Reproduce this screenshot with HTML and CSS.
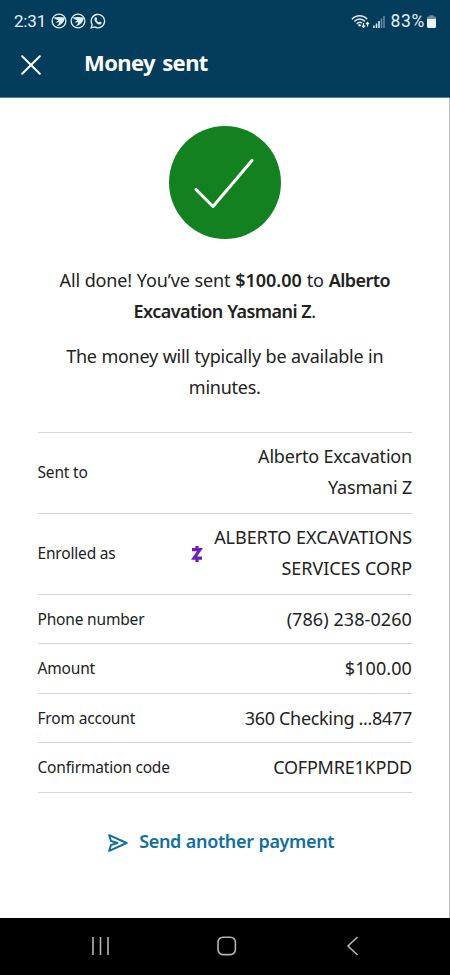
FILE: index.html
```html
<!DOCTYPE html>
<html lang="en">
<head>
  <meta charset="UTF-8">
  <meta name="viewport" content="width=device-width, initial-scale=1.0">
  <link rel="stylesheet" href="styles.css">
  <title>Money sent</title>
</head>
<body>
  <header class="header">
    <div class="status">
      <span class="status__time">2:31</span>
      <svg class="status__app" viewBox="0 0 16 16">
        <circle cx="8" cy="8" r="6.9" />
        <path class="fill" d="M2.2 4.6Q8 3.6 13.8 4.6C13.8 8.8 10 12.6 5.4 13.4 7 11.8 8 10.6 8.4 9.2L4.6 9.4 7.4 7.2Q4.4 6.8 2.2 4.6Z" />
      </svg>
      <svg class="status__app" viewBox="0 0 16 16">
        <circle cx="8" cy="8" r="6.9" />
        <path class="fill" d="M2.2 4.6Q8 3.6 13.8 4.6C13.8 8.8 10 12.6 5.4 13.4 7 11.8 8 10.6 8.4 9.2L4.6 9.4 7.4 7.2Q4.4 6.8 2.2 4.6Z" />
      </svg>
      <svg class="status__app" viewBox="0 0 16 16">
        <path d="M1.2 14.8 2.2 11.6A6.7 6.7 0 1 1 4.6 13.9Z" />
        <path class="fill" d="M5.5 4.3 6.6 4.4 7.2 6 6.5 7C7 8.1 7.8 8.9 9 9.4L9.9 8.6 11.6 9.4C11.6 10.8 10.8 11.5 9.6 11.5 7.2 11.3 4.7 8.8 4.5 6.4 4.4 5.4 4.8 4.7 5.5 4.3Z" />
      </svg>
      <svg class="status__wifi" viewBox="0 0 19 15">
        <path d="M1 5.2C5.2.5 12 .5 16.2 5.2M3.4 7.6C6.5 4.3 10.8 4.3 13.9 7.4M5.8 10C7.5 8.1 9.6 8 11 9" />
        <circle class="fill" cx="8.6" cy="11.3" r="1.2" />
        <path class="thin" d="M12.5 9V13M10.9 11.6 12.5 13.3 14.1 11.6M16.5 12.6V8.6M14.9 10.2 16.5 8.5 18.1 10.2" />
      </svg>
      <svg class="status__signal" viewBox="0 0 12 13">
        <path d="M1 13V10.5M3.5 13V8.5M6 13V6" />
        <path class="dim" d="M8.5 13V3.5M11 13V1" />
      </svg>
      <span class="status__percent">83%</span>
      <svg class="status__battery" viewBox="0 0 9 13">
        <path class="dim" d="M0 4V2.5Q0 1.5 1 1.5H2.5V.3H6.5V1.5H8Q9 1.5 9 2.5V4Z" />
        <path d="M0 4H9V11.5Q9 13 7.5 13H1.5Q0 13 0 11.5Z" />
      </svg>
    </div>
    <div class="title-bar">
      <svg class="title-bar__close" viewBox="0 0 20 20">
        <path d="M1.2 1.2 18.8 18.8M18.8 1.2 1.2 18.8" />
      </svg>
      <h1 class="title-bar__title">Money sent</h1>
    </div>
  </header>

  <main class="content">
    <svg class="check" viewBox="0 0 112 113">
      <ellipse cx="56" cy="56.5" rx="56" ry="56.5" />
      <path d="M27 63.5 44 80.5 83 34.5" />
    </svg>

    <p class="message">All done! You’ve sent <b class="message__sum">$100.00</b> to <b>Alberto<br>Excavation Yasmani Z</b>.</p>
    <p class="message message--note">The money will typically be available in<br>minutes.</p>

    <dl class="details">
      <div class="details__row">
        <dt>Sent to</dt>
        <dd>Alberto Excavation<br>Yasmani Z</dd>
      </div>
      <div class="details__row">
        <dt>Enrolled as</dt>
        <dd class="details__enrolled">
          <svg class="zelle" viewBox="0 0 12 18">
            <path d="M6 1V4M1 4.6H9L3 13.2H11M6 14V17" />
          </svg>
          <span>ALBERTO EXCAVATIONS<br>SERVICES CORP</span>
        </dd>
      </div>
      <div class="details__row details__row--single">
        <dt>Phone number</dt>
        <dd class="details__number">(786) 238-0260</dd>
      </div>
      <div class="details__row details__row--single">
        <dt>Amount</dt>
        <dd class="details__number">$100.00</dd>
      </div>
      <div class="details__row details__row--single">
        <dt>From account</dt>
        <dd class="details__account">360 Checking ...8477</dd>
      </div>
      <div class="details__row details__row--single">
        <dt>Confirmation code</dt>
        <dd class="details__code">COFPMRE1KPDD</dd>
      </div>
    </dl>

    <a class="again">
      <svg class="again__icon" viewBox="0 0 20 18">
        <path d="M1.2 1.2 18.6 9 1.2 16.8 3 11 9.5 9 3 7Z" />
      </svg>
      <span>Send another payment</span>
    </a>
  </main>

  <nav class="nav">
    <svg viewBox="0 0 20 20"><path d="M2 1V19M9.5 1V19M17 1V19" /></svg>
    <svg viewBox="0 0 20 20"><rect x="1" y="1.2" width="17.4" height="17.4" rx="5" /></svg>
    <svg viewBox="0 0 20 20"><path d="M14.5 1 5 10 14.5 19" /></svg>
  </nav>
</body>
</html>
```
FILE: styles.css
```css
* {
  box-sizing: border-box;
}

body {
  margin: 0;
  height: 975px;
  display: flex;
  flex-direction: column;
  background: #fff;
  color: #222;
  font-family: "Noto Sans", sans-serif;
  font-size: 18px;
  line-height: 31px;
}

svg {
  display: block;
  flex: none;
  fill: none;
}

/* header */
.header {
  display: flow-root;
  height: 98px;
  background: #033d5b;
  color: #fff;
  border-bottom: 1px solid #4f7a90;
}

.status {
  display: flex;
  align-items: center;
  height: 24px;
  margin-top: 9px;
  padding: 0 14px;
  color: #e4eff5;
  font-family: Roboto, sans-serif;
  font-size: 17px;
  line-height: 24px;
}

.status__time {
  width: 36.5px;
  letter-spacing: -.2px;
}

.status__percent {
  font-size: 17.5px;
  letter-spacing: .7px;
}

.status__app {
  width: 16px;
  height: 16px;
  margin-right: 3.5px;
  stroke: #e4eff5;
  stroke-width: 1.3;
}

.status .fill {
  fill: #e4eff5;
  stroke: none;
}

.status__wifi {
  width: 19px;
  height: 15px;
  margin-left: auto;
  stroke: #e4eff5;
  stroke-width: 1.5;
}

.status__wifi .thin {
  stroke-width: 1.2;
}

.status__signal {
  width: 12px;
  height: 13px;
  margin: 0 5px 0 3px;
  stroke: #e4eff5;
  stroke-width: 1.5;
}

.status__battery {
  width: 9px;
  height: 13px;
  margin-left: 2px;
  fill: #e9f3f8;
}

.status .dim {
  opacity: .45;
}

.title-bar {
  display: flex;
  align-items: center;
  height: 40px;
  margin-top: 11px;
  padding-left: 21px;
}

.title-bar__close {
  width: 20px;
  height: 20px;
  margin-top: 2px;
  stroke: #fff;
  stroke-width: 2;
  stroke-linecap: round;
}

.title-bar__title {
  margin: 0 0 4px 43px;
  font-size: 22px;
  font-weight: 700;
  line-height: 30px;
  letter-spacing: -.6px;
  word-spacing: 2px;
}

/* content */
.content {
  flex: 1;
  padding: 28px 37px 0 37.5px;
  border-right: 1px solid #b9bcbe;
}

.check {
  width: 112px;
  height: 113px;
  margin: 0 auto 26px;
}

.check ellipse {
  fill: #148121;
}

.check path {
  stroke: #fff;
  stroke-width: 3;
  stroke-linecap: round;
  stroke-linejoin: round;
}

.message {
  margin: 0 0 14px;
  text-align: center;
  white-space: nowrap;
  letter-spacing: -.15px;
  word-spacing: .3px;
}

.message b {
  font-weight: 600;
  letter-spacing: -.56px;
}

.message .message__sum {
  letter-spacing: 0;
}

.message--note {
  margin-bottom: 29px;
  letter-spacing: -.25px;
}

.details {
  margin: 0;
  border-top: 1px solid #d4d4d4;
}

.details__row {
  display: flex;
  align-items: center;
  justify-content: space-between;
  padding: 8px 0 10px;
  border-bottom: 1px solid #d4d4d4;
}

.details__row--single {
  padding: 8.8px 0 8.7px;
}

.details dt {
  font-size: 15.5px;
  letter-spacing: -.18px;
}

.details dd {
  margin: 0;
  text-align: right;
  letter-spacing: -.18px;
}

.details .details__enrolled {
  display: flex;
  align-items: center;
  letter-spacing: -.04px;
}

.details .details__number {
  letter-spacing: .08px;
}

.details .details__account {
  letter-spacing: -.32px;
}

.details .details__code {
  letter-spacing: -.22px;
}

.zelle {
  width: 12px;
  height: 18px;
  margin: 2px 11px 0 0;
  stroke: #6b1fc0;
  stroke-width: 3.2;
}

.again {
  display: flex;
  align-items: center;
  justify-content: center;
  margin-top: 33.5px;
  padding-right: 7px;
  color: #106f9d;
  font-weight: 600;
  letter-spacing: -.35px;
  word-spacing: .5px;
}

.again__icon {
  width: 20px;
  height: 18px;
  margin: 2px 11px 0 0;
  stroke: #106f9d;
  stroke-width: 2;
  stroke-linejoin: round;
}

/* android nav */
.nav {
  display: flex;
  justify-content: space-between;
  height: 57px;
  padding: 18px 87px 0 91px;
  background: #000;
}

.nav svg {
  width: 20px;
  height: 20px;
  stroke: #b4b4b4;
  stroke-width: 1.6;
}
```
